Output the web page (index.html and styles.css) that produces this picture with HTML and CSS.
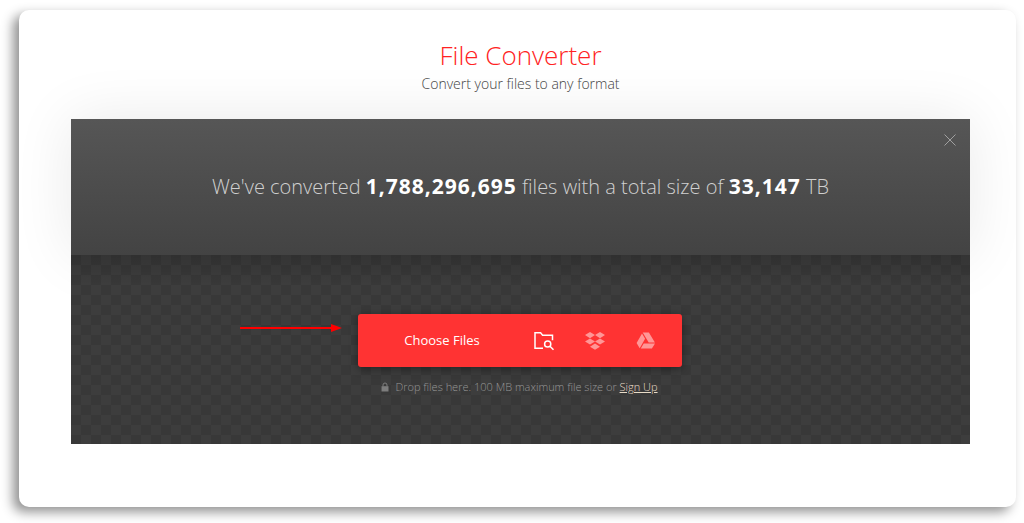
FILE: index.html
```html
<!DOCTYPE html>
<html lang="en">
<head>
  <meta charset="UTF-8" />
  <meta name="viewport" content="width=device-width, initial-scale=1.0"/>
  <title>File Converter</title>
  <link rel="stylesheet" href="styles.css">
</head>
<body>
  <main class="card">
    <header class="intro">
      <h1 class="title">File Converter</h1>
      <p class="subtitle">Convert your files to any format</p>
    </header>

    <div class="converter">
      <section class="stats">
        <p class="stats-text">We've converted <strong>1,788,296,695</strong> files with a total size of <strong>33,147</strong> TB</p>
        <button type="button" class="close-button" aria-label="Close">
          <svg width="12" height="12" viewBox="0 0 12 12"><path d="M0.5 0.5l11 11M11.5 0.5l-11 11" stroke="#a0a0a0" fill="none"/></svg>
        </button>
      </section>

      <section class="drop-area">
        <div class="picker">
          <button type="button" class="choose-button">Choose Files</button>
          <button type="button" class="source-button" aria-label="From computer">
            <svg width="20" height="20" viewBox="0 0 20 20" fill="none" stroke="#fff" stroke-width="1.5">
              <path d="M9 17.2H1V1.8h5.6l2 2.4H18.5v5"/>
              <circle cx="13.7" cy="13" r="3.1"/>
              <path d="M16 15.2l3.5 3.5"/>
            </svg>
          </button>
          <button type="button" class="source-button" aria-label="From Dropbox">
            <svg width="20" height="20" viewBox="0 0 20 20" fill="#ff9696">
              <path d="M5 1l5 3.1-5 3.1L0 4.1zM15 1l5 3.1-5 3.1-5-3.1zM5 7.4l5 3.1-5 3.1-5-3.1zM15 7.4l5 3.1-5 3.1-5-3.1zM10 12.6l5 3.1-5 3.1-5-3.1z"/>
            </svg>
          </button>
          <button type="button" class="source-button" aria-label="From Google Drive">
            <svg width="20" height="20" viewBox="0 0 20 20" fill="#ff9696">
              <path d="M6.7 1.5h6.2l6 10h-6.2zM6 2.6l3.1 5.2-5.4 9.4L.6 12zM7.7 12.5H19l-3.1 5H4.8z"/>
            </svg>
          </button>
        </div>
        <p class="hint">
          <svg class="lock" width="8" height="10" viewBox="0 0 8 10"><path d="M.5 4.2h7V9.5h-7z" fill="#7d7d7d"/><path d="M2 4.5V3a2 2 0 0 1 4 0v1.5" fill="none" stroke="#7d7d7d"/></svg>
          <span>Drop files here. 100 MB maximum file size or <a href="#">Sign Up</a></span>
        </p>
        <svg class="arrow" width="102" height="8" viewBox="0 0 102 8"><path d="M0 3h91V0l11 4-11 4V5H0z" fill="#f00"/></svg>
      </section>
    </div>
  </main>
</body>
</html>
```
FILE: styles.css
```css
*, *::before, *::after {
  box-sizing: border-box;
}

body {
  margin: 0;
  padding: 10px 8px 16px 19px;
  background: #fff;
  font-family: 'Open Sans', sans-serif;
  font-weight: 300;
}

h1, p {
  margin: 0;
}

button {
  padding: 0;
  border: none;
  background: none;
  font: inherit;
  cursor: pointer;
}

svg {
  display: block;
}

.card {
  padding: 28px 46px 63px 52px;
  border-radius: 10px;
  background: #fff;
  box-shadow: -6px 5px 12px rgba(0, 0, 0, 0.43);
  overflow: hidden;
}

.intro {
  height: 81px;
  text-align: center;
}

.title {
  font-size: 26px;
  line-height: 34px;
  font-weight: 300;
  color: #f22;
}

.subtitle {
  font-size: 14px;
  line-height: 24px;
  color: #444;
}

.stats {
  position: relative;
  display: flex;
  align-items: center;
  justify-content: center;
  min-height: 136px;
  padding-bottom: 2px;
  background: linear-gradient(#565656, #434343);
  box-shadow: 0 0 60px rgba(0, 0, 0, 0.09);
}

.stats-text {
  font-size: 20px;
  line-height: 28px;
  color: #d0d0d0;
}

.stats-text strong {
  font-size: 21px;
  font-weight: 700;
  letter-spacing: 1px;
  color: #fff;
}

.close-button {
  position: absolute;
  top: 15px;
  right: 14px;
}

.drop-area {
  position: relative;
  display: flex;
  flex-direction: column;
  align-items: center;
  gap: 10px;
  padding: 59px 2px 47px 0;
  background:
    linear-gradient(rgba(0, 0, 0, 0.15), transparent 30px),
    repeating-conic-gradient(#3d3d3d 0 25%, #383838 0 50%) 0 0 / 20px 20px;
}

.picker {
  display: flex;
  width: 324px;
  height: 53px;
  padding-right: 10px;
  border-radius: 3px;
  background: #f33;
  box-shadow: 0 2px 8px rgba(0, 0, 0, 0.4);
}

.choose-button {
  flex: 1;
  padding: 0 0 2px 8px;
  font-size: 13px;
  font-weight: 400;
  color: #fff;
}

.source-button {
  display: flex;
  align-items: center;
  justify-content: center;
  width: 51px;
}

.hint {
  display: flex;
  align-items: center;
  gap: 6px;
  font-size: 11px;
  line-height: 20px;
  color: #969696;
}

.hint a {
  color: #e8dcc8;
}

/* points at the picker from the left */
.arrow {
  position: absolute;
  top: 69px;
  right: calc(50% + 179px);
}
```
